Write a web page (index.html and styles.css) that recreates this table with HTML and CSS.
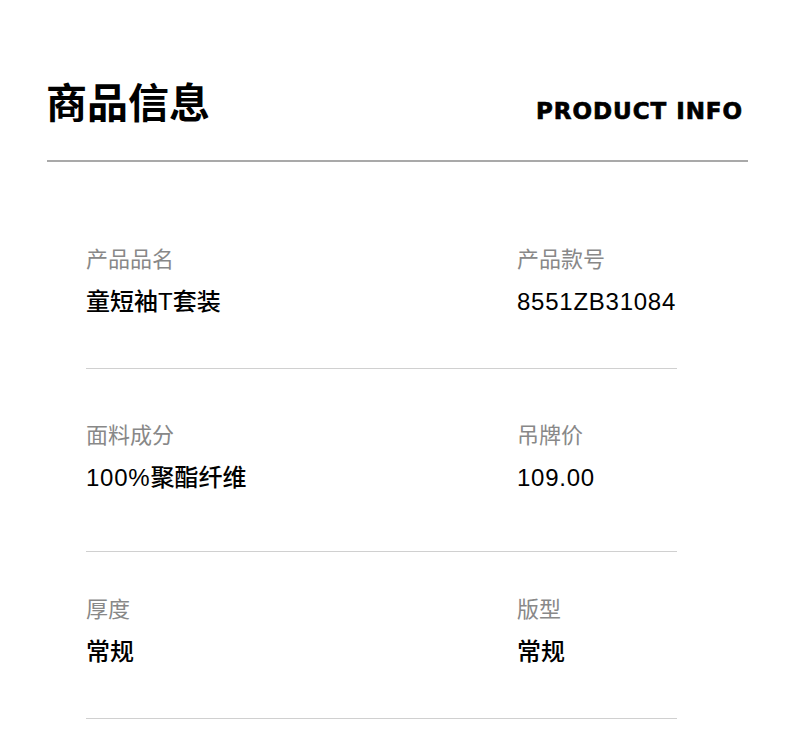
FILE: index.html
```html
<!DOCTYPE html>
<html lang="zh-CN">
<head>
  <meta charset="UTF-8" />
  <meta name="viewport" content="width=device-width, initial-scale=1.0"/>
  <title>商品信息</title>
  <link rel="stylesheet" href="styles.css">
</head>
<body>

  <div class="info">

    <div class="info-head">
      <h1>商品信息</h1>
      <span class="info-en">PRODUCT INFO</span>
    </div>

    <div class="info-list">

      <div class="row">
        <div class="cell">
          <div class="label">产品品名</div>
          <div class="value">童短袖T套装</div>
        </div>
        <div class="cell">
          <div class="label">产品款号</div>
          <div class="value num">8551ZB31084</div>
        </div>
      </div>

      <div class="row">
        <div class="cell">
          <div class="label">面料成分</div>
          <div class="value"><span class="num">100%</span>聚酯纤维</div>
        </div>
        <div class="cell">
          <div class="label">吊牌价</div>
          <div class="value num">109.00</div>
        </div>
      </div>

      <div class="row">
        <div class="cell">
          <div class="label">厚度</div>
          <div class="value">常规</div>
        </div>
        <div class="cell">
          <div class="label">版型</div>
          <div class="value">常规</div>
        </div>
      </div>

    </div>

  </div>

</body>
</html>
```

FILE: styles.css
```css
* {
  margin: 0;
  padding: 0;
  box-sizing: border-box;
}

body {
  font-family: "Liberation Sans", "Noto Sans CJK SC", sans-serif;
  background-color: #fff;
  color: #000;
}

.info {
  padding: 78px 42px 0 47px;
}

.info-head {
  display: flex;
  justify-content: space-between;
  align-items: flex-end;
  padding: 0 6px 30px 0;
  border-bottom: 2px solid #a9a9a9;
}

.info-head h1 {
  font-family: "Noto Sans CJK SC", sans-serif;
  font-size: 41px;
  font-weight: 700;
  line-height: 52px;
  margin: -4px 0 4px -1px;
}

.info-en {
  font-family: "DejaVu Sans", sans-serif;
  font-weight: 700;
  font-size: 23px;
  line-height: 26px;
  letter-spacing: 0.95px;
  -webkit-text-stroke: 0.7px #000;
  margin: 0 -1px 6px 0;
}

.info-list {
  margin: 0 71px 0 39px;
}

.row {
  display: grid;
  grid-template-columns: 431px 1fr;
  border-bottom: 1px solid #d0d0d0;
  padding: 51px 0 51px;
}

.row:first-child {
  padding-top: 80px;
}

.row:nth-child(2) {
  padding-top: 49px;
  padding-bottom: 58px;
}

.row:nth-child(3) {
  padding-top: 40px;
}

.label {
  font-family: "Noto Sans CJK SC", sans-serif;
  font-size: 22px;
  line-height: 30px;
  color: #888;
}

.value {
  font-size: 24px;
  line-height: 30px;
  margin-top: 15px;
  font-weight: 500;
}

.num {
  letter-spacing: 0.75px;
}
```
